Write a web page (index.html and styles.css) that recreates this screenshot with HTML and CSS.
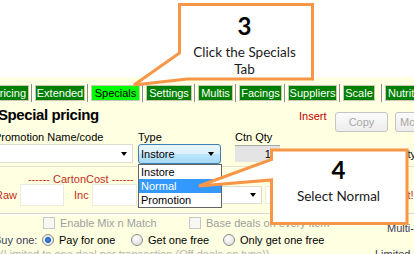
FILE: index.html
```html
<!DOCTYPE html>
<html>
<head>
<meta charset="utf-8">
<link rel="stylesheet" href="styles.css">
</head>
<body>
<div class="top"></div>
<div class="panel">
  <div class="tabs">
    <div class="tab w-pricing">Pricing</div><div class="sep"></div>
    <div class="tab w-ext">Extended</div><div class="sep"></div>
    <div class="tab tab-on w-spec">Specials</div><div class="sep"></div>
    <div class="tab w-set">Settings</div><div class="sep"></div>
    <div class="tab w-mul">Multis</div><div class="sep"></div>
    <div class="tab w-fac">Facings</div><div class="sep"></div>
    <div class="tab w-sup">Suppliers</div><div class="sep"></div>
    <div class="tab w-sca">Scale</div><div class="sep sep-wide"></div>
    <div class="tab w-nut">Nutrition</div>
  </div>
  <div class="head-row">
    <h1 class="title">Special pricing</h1>
    <span class="insert">Insert</span>
    <button class="btn btn-copy">Copy</button>
    <button class="btn btn-more">Modify</button>
  </div>
  <div class="label-row">
    <span class="lbl-promo">Promotion Name/code</span>
    <span class="lbl-type">Type</span>
    <span class="lbl-ctn">Ctn Qty</span>
  </div>
  <div class="field-row">
    <div class="combo promo"><span class="arrow"></span></div>
    <div class="select-type"><span>Instore</span><span class="arrow"></span></div>
    <div class="ctn">10</div>
    <span class="qty">Qty</span>
  </div>
  <div class="group">
    <div class="group-title">------ CartonCost ------</div>
    <div class="cost-row">
      <span class="lbl-raw">Raw</span>
      <div class="input raw"></div>
      <span class="lbl-inc">Inc</span>
      <div class="input inc"></div>
      <div class="combo c2"><span class="arrow"></span></div>
      <div class="input c3"></div>
      <span class="warn">Cost!</span>
    </div>
  </div>
  <div class="hr"></div>
  <div class="check-row">
    <div class="check c-one"><span class="cb"></span><span class="check-text">Enable Mix n Match</span></div>
    <div class="check c-two"><span class="cb"></span><span class="check-text">Base deals on every item</span></div>
    <span class="multi">Multi-Buy</span>
  </div>
  <div class="radio-row">
    <span class="buy">Buy one:</span>
    <div class="ropt r1"><span class="rb on"></span><span class="rtext">Pay for one</span></div>
    <div class="ropt r2"><span class="rb"></span><span class="rtext">Get one free</span></div>
    <div class="ropt r3"><span class="rb"></span><span class="rtext">Only get one free</span></div>
  </div>
  <div class="foot">
    <span class="faint">(Limited to one deal per transaction (Off deals on type))</span>
    <span class="limited">Limited</span>
  </div>
</div>

<div class="dropdown">
  <div class="dd-item">Instore</div>
  <div class="dd-item sel">Normal</div>
  <div class="dd-item">Promotion</div>
</div>

<svg class="overlay" width="414" height="254" viewBox="0 0 414 254">
  <path d="M179.5,4.5 H312.5 V79 H187 L134,85 L179.5,53 Z" fill="#fff" stroke="#f79646" stroke-width="3"/>
  <path d="M271.5,150 H407 V223.5 H271.5 V180 L199,186 L271.5,159.5 Z" fill="#fff" stroke="#f79646" stroke-width="3"/>
</svg>

<div class="callout-text ct3">
  <div class="num">3</div>
  <div class="desc">Click the Specials</div>
  <div class="desc">Tab</div>
</div>
<div class="callout-text ct4">
  <div class="num">4</div>
  <div class="desc">Select Normal</div>
</div>
</body>
</html>
```

FILE: styles.css
```css
* { box-sizing: border-box; }
html, body { margin: 0; padding: 0; }
body {
  width: 414px;
  height: 254px;
  overflow: hidden;
  background: #fff;
  font-family: "Liberation Sans", Arial, sans-serif;
  font-size: 11px;
  color: #000;
  position: relative;
}
.top { height: 77px; }
.panel {
  height: 177px;
  background: #ffffe1;
  padding-top: 8px;
  overflow: hidden;
}

/* tabs */
.tabs { display: flex; align-items: center; margin-left: -12px; height: 16px; }
.tabs > * { flex: none; }
.tab {
  height: 16px;
  background: #008000;
  color: #fff;
  border: 1px solid #c8c8b4;
  text-align: center;
  line-height: 14px;
  white-space: nowrap;
  overflow: hidden;
}
.tab-on { background: #00ff00; color: #000; }
.sep { width: 2px; height: 18px; border-left: 1px solid #8c8c8c; border-right: 1px solid #fff; margin: 0 2px; }
.sep-wide { margin-left: 6px; }
.w-pricing { width: 41px; text-align: right; padding-right: 2px; }
.w-ext { width: 50px; }
.w-spec { width: 49px; }
.w-set { width: 46px; }
.w-mul { width: 35px; }
.w-fac { width: 43px; }
.w-sup { width: 49px; }
.w-sca { width: 32px; }
.w-nut { width: 50px; text-align: left; padding-left: 2px; }

/* heading row */
.head-row { display: flex; align-items: flex-start; height: 30px; }
.head-row > * { flex: none; }
.title {
  margin: 5px 0 0 -2px;
  width: 301px;
  font-size: 15px;
  font-weight: bold;
  letter-spacing: -0.4px;
  line-height: 17px;
}
.insert { margin-top: 9px; width: 26px; margin-right: 10px; color: #c00000; line-height: 13px; }
.btn {
  margin-top: 11px;
  height: 20px;
  border: 1px solid #c4c4c4;
  border-radius: 3px;
  background: linear-gradient(#fbfbfb, #ededed);
  color: #a8a8a8;
  font: 11px "Liberation Sans", Arial, sans-serif;
  padding: 0;
}
.btn-copy { width: 53px; margin-right: 7px; }
.btn-more { width: 50px; text-align: left; padding-left: 4px; }

/* labels */
.label-row { display: flex; height: 13px; line-height: 13px; }
.label-row > * { flex: none; }
.lbl-promo { margin-left: -6px; width: 144px; }
.lbl-type { width: 97px; }

/* fields */
.field-row { display: flex; align-items: flex-start; height: 20px; }
.field-row > * { flex: none; }
.combo {
  background: #fff;
  border: 1px solid #dcdcd0;
  display: flex;
  align-items: center;
  justify-content: flex-end;
  padding-right: 5px;
}
.combo.promo { margin-left: -5px; width: 138px; height: 19px; }
.arrow {
  width: 0;
  height: 0;
  border-left: 3.5px solid transparent;
  border-right: 3.5px solid transparent;
  border-top: 4px solid #000;
}
.select-type {
  margin-left: 5px;
  width: 83px;
  height: 20px;
  border: 1px solid #3c7fb1;
  border-radius: 3px;
  background: linear-gradient(#eaf6fd 0%, #d9f0fc 50%, #bee6fd 50%, #a7d9f5 100%);
  display: flex;
  align-items: center;
  justify-content: space-between;
  padding: 0 6px 0 2px;
}
.ctn {
  margin-left: 14px;
  margin-top: 1px;
  width: 45px;
  height: 17px;
  background: #e4e4e4;
  border-top: 1px solid #a8a8a8;
  text-align: right;
  padding-right: 3px;
  line-height: 16px;
}
.qty { margin-left: 119px; line-height: 20px; }

/* carton cost group */
.group { margin-top: 2px; border-top: 1px solid #e2e2cc; padding-top: 6px; }
.group-title { margin-left: 28px; color: #c0301c; line-height: 13px; }
.cost-row { display: flex; align-items: center; height: 22px; margin-top: -2px; }
.cost-row > * { flex: none; }
.lbl-raw { margin-left: -5px; width: 22px; color: #c0301c; }
.lbl-inc { margin-left: 10px; width: 15px; color: #c0301c; }
.input { background: #fff; border: 1px solid #ececdc; }
.input.raw { margin-left: 3px; width: 44px; height: 22px; }
.input.inc { margin-left: 3px; width: 45px; height: 22px; }
.combo.c2 { margin-left: 3px; width: 122px; height: 18px; }
.input.c3 { margin-left: 3px; width: 40px; height: 18px; }
.warn { margin-left: 83px; color: #c0301c; }

.hr { margin-top: 7px; border-top: 1px solid #d8d8c4; border-bottom: 1px solid #fff; }

/* checkboxes */
.check-row { display: flex; align-items: flex-start; height: 16px; margin-top: 2px; }
.check-row > * { flex: none; }
.check { display: flex; align-items: center; height: 12px; }
.c-one { margin-left: 43px; width: 146px; }
.c-two { width: 198px; }
.cb { width: 12px; height: 12px; border: 1px solid #c8c8c8; background: #f7f7f3; flex: none; }
.check-text { margin-left: 5px; color: #a0a0a0; white-space: nowrap; line-height: 12px; }
.multi { margin-top: 5px; color: #3a3a5c; white-space: nowrap; }

/* radios */
.radio-row { display: flex; align-items: center; height: 14px; }
.radio-row > * { flex: none; }
.buy { margin-left: -6px; width: 48px; color: #3a3a5c; }
.ropt { display: flex; align-items: center; }
.r1 { width: 89px; }
.r2 { width: 92px; }
.rb {
  width: 12px;
  height: 12px;
  border-radius: 50%;
  border: 1px solid #8e8e8e;
  background: radial-gradient(circle at 40% 35%, #ffffff, #d6d6d6);
  flex: none;
}
.rb.on { background: radial-gradient(circle, #5aa0f0 0, #1255b8 2.5px, #f2f2f2 3.5px, #d4d4d4 6px); }
.rtext { margin-left: 5px; white-space: nowrap; }

.foot { display: flex; margin-top: 1px; height: 13px; line-height: 13px; }
.foot > * { flex: none; }
.faint { width: 375px; color: #b4b4b4; white-space: nowrap; overflow: hidden; }
.limited { color: #3a3a5c; }

/* overlays */
.dropdown {
  position: absolute;
  left: 138px;
  top: 164px;
  width: 84px;
  height: 44px;
  border: 1px solid #646464;
  background: #fff;
}
.dd-item { height: 14px; line-height: 14px; padding-left: 2px; }
.dd-item.sel { background: #3399ff; color: #fff; }
.overlay { position: absolute; left: 0; top: 0; pointer-events: none; }
.callout-text {
  position: absolute;
  width: 133px;
  text-align: center;
  font-family: Lato, "Open Sans", sans-serif;
  color: #1a1a1a;
}
.ct3 { left: 178px; top: 12px; }
.ct4 { left: 272px; top: 156px; }
.num { font-size: 24px; font-weight: bold; line-height: 28px; margin-bottom: 4px; color: #000; }
.desc { font-size: 13.5px; line-height: 17px; }
```
